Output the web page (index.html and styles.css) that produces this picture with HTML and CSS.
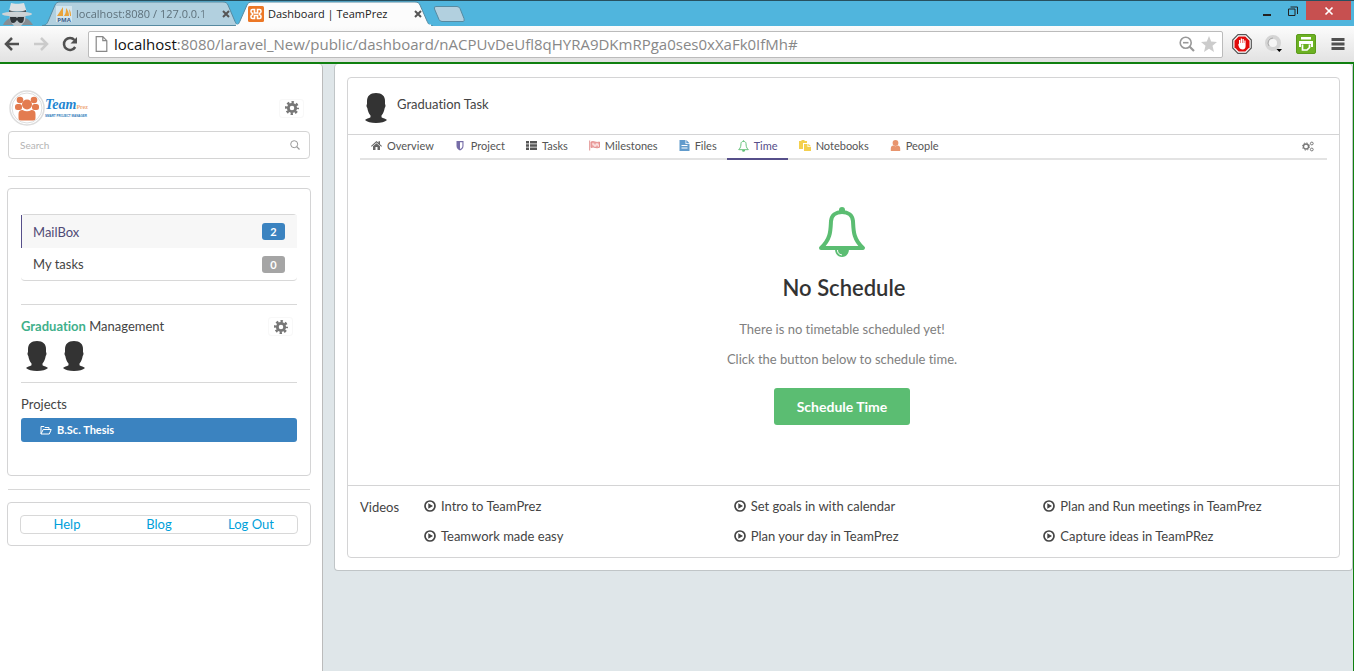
FILE: index.html
```html
<!DOCTYPE html>
<html lang="en">
<head>
<meta charset="utf-8">
<title>Dashboard | TeamPrez</title>
<link rel="stylesheet" href="styles.css">
</head>
<body>
<svg class="defs" aria-hidden="true">
  <symbol id="gear" viewBox="0 0 16 16"><g fill="none" stroke="currentColor"><circle cx="8" cy="8" r="4.200" stroke-width="3.200"/><circle cx="8" cy="8" r="6.600" stroke-width="2.800" stroke-dasharray="2.700 2.484" stroke-dashoffset="1.350"/></g></symbol>
  <symbol id="person" viewBox="0 0 24 30"><path fill="#333" d="M12 0c6 0 9 3 9 8v3c.8 1 .6 3-.3 4-.6 3.500-1.500 5.500-3.200 7.500v1.800c1.500 1 4.500 1.500 5.500 2.700C21 28.800 17 30 12 30S3 28.800 1 27c1-1.200 4-1.700 5.500-2.700v-1.800C4.800 20.500 3.900 18.500 3.300 15c-.9-1-1.100-3-.3-4V8c0-5 3-8 9-8z"/></symbol>
  <symbol id="play" viewBox="0 0 12 12"><circle cx="6" cy="6" r="5" fill="none" stroke="currentColor" stroke-width="1.700"/><path d="M4.300 3.200v5.600L9 6z" fill="currentColor"/></symbol>
  <symbol id="bell" viewBox="0 0 48 50"><g fill="none" stroke="currentColor" stroke-width="4" stroke-linejoin="round"><path d="M3 41C13 32 12.500 23 13 14c.5-6 5-9 11-9s10.500 3 11 9c.5 9 0 18 10 27z"/></g><path d="M21 5V3a3 3 0 0 1 6 0v2zM17 42h14c0 5-3 8-7 8s-7-3-7-8z" fill="currentColor"/><path d="M19.500 43c0 3 1.500 4.500 4.500 5" fill="none" stroke="#fff"/></symbol>
</svg>

<header class="browser">
  <div class="tabstrip">
    <svg class="incognito" viewBox="0 0 34 25"><path d="M3 24c2-4 4-6 7-7h15c4 1 6 4 8 7z" fill="#858d93"/><path d="M9 12h17l-1 8-4 5h-7l-4-5z" fill="#bbc3c8"/><path d="M11 2c3 1 9 1 13 0l2.500 8H9z" fill="#dce1e4"/><path d="M9 9c5 2 12 2 17 0v3H9z" fill="#444c52"/><ellipse cx="17" cy="13" rx="15" ry="2.600" fill="#cdd3d6"/><path d="M10 16h6l1 1 1-1h6c0 4-1 6-3 6s-3-2-4-3c-1 1-2 3-4 3s-3-2-3-6z" fill="#30363a"/></svg>
    <div class="tab tab-back">
      <svg class="tab-shape" viewBox="0 0 199 25" preserveAspectRatio="none"><path d="M0 24.500c4 0 5-2 6-4L13 4c1-2 2-3 5-3h163c3 0 4 1 5 3l7 16.500c1 2 2 4 6 4z" fill="#b2d0df" stroke="#568aa1"/></svg>
      <svg class="fav" viewBox="0 0 16 16"><path fill="#d3e5ee" d="M0 0h16v16H0z"/><path d="M7 1v9H1zM10 2c2 2 3 5 3 8H8c2-3 2-5 2-8zM13 3c2 2 2 5 2 7h-1z" fill="#e9a33b"/><text x="8" y="15.500" font-size="6" font-weight="bold" text-anchor="middle" fill="#385c89">PMA</text></svg>
      <span class="tab-title fade">localhost:8080 / 127.0.0.1</span>
      <button class="close" aria-label="Close tab"><svg viewBox="0 0 8 8"><path d="M1 1l6 6M7 1L1 7"/></svg></button>
    </div>
    <div class="tab tab-front">
      <svg class="tab-shape" viewBox="0 0 199 25" preserveAspectRatio="none"><path d="M0 25c4 0 5-3 6-5L13 4c1-2 2-3 5-3h163c3 0 4 1 5 3l7 16c1 2 2 5 6 5z" fill="#fcfcfc" stroke="#568aa1"/><path d="M2 24.500h195" stroke="#fcfcfc" stroke-width="2"/></svg>
      <svg class="fav" viewBox="0 0 16 16"><rect width="16" height="16" rx="1.500" fill="#ec7725"/><path d="M6.500 7V3.500h-2Q3 3.500 3 5v.5Q3 7 4.500 7.200v1.600Q3 9 3 10.500v.5q0 1.500 1.500 1.500h2V9.500h3v3h2q1.500 0 1.500-1.500v-.5q0-1.500-1.500-1.700V7.200Q13 7 13 5.500V5q0-1.500-1.500-1.500h-2V7z" fill="none" stroke="#fff" stroke-width="1.600"/></svg>
      <span class="tab-title">Dashboard | TeamPrez</span>
      <button class="close" aria-label="Close tab"><svg viewBox="0 0 8 8"><path d="M1 1l6 6M7 1L1 7"/></svg></button>
    </div>
    <button class="newtab" aria-label="New tab"><svg viewBox="0 0 32 16"><path d="M3 .5h21q2 0 3 2l4 10q1 3-1 3H9q-2 0-3-2L1.500 3q-1-2.500 1.500-2.500z" fill="#b2d0df" stroke="#568aa1"/></svg></button>
    <div class="window-buttons">
      <button aria-label="Minimize"><svg viewBox="0 0 10 10"><path d="M1 8h8v2H1z" fill="#222"/></svg></button>
      <button aria-label="Restore"><svg viewBox="0 0 10 10"><path d="M.5 3h6.500v6.500H.500zM2.500 1h7v7" fill="none" stroke="#222"/></svg></button>
      <button class="win-close" aria-label="Close"><svg viewBox="0 0 10 10"><path d="M1.500 1.500l7 7M8.500 1.500l-7 7" stroke="#fff" stroke-width="1.700"/></svg></button>
    </div>
  </div>
  <div class="toolbar">
    <button aria-label="Back"><svg viewBox="0 0 16 16"><path d="M15 8H3M8 2L2 8l6 6" fill="none" stroke="#505050" stroke-width="2.500"/></svg></button>
    <button aria-label="Forward"><svg viewBox="0 0 16 16"><path d="M1 8h12M8 2l6 6-6 6" fill="none" stroke="#cbcbcb" stroke-width="2.500"/></svg></button>
    <button aria-label="Reload"><svg viewBox="0 0 16 16"><path d="M13.200 11A6 6 0 1 1 12.500 4" fill="none" stroke="#505050" stroke-width="2.500"/><path d="M15 1v6.500H8.500z" fill="#505050"/></svg></button>
    <div class="address">
      <svg class="doc" viewBox="0 0 12 16"><path d="M.7.7h6.600l4 4v10.600H.7zM7.300.7v4h4" fill="#fff" stroke="#888" stroke-width="1.200"/></svg>
      <span class="url"><b>localhost</b>:8080/laravel_New/public/dashboard/nACPUvDeUfl8qHYRA9DKmRPga0ses0xXaFk0IfMh#</span>
      <svg class="i16" viewBox="0 0 16 16"><g fill="none" stroke="#999" stroke-width="1.600"><circle cx="6.700" cy="6.700" r="5.500"/><path d="M4 6.700h5.500"/><path d="M10.500 10.500l4.500 4.500" stroke-width="2.200"/></g></svg>
      <svg class="i16" viewBox="0 0 16 16"><path d="M8 0l2.200 5.600 5.800.4-4.500 3.800L13 16l-5-3.300L3 16l1.500-6.200L0 6l5.800-.4z" fill="#ccc"/></svg>
    </div>
    <div class="extensions">
      <button aria-label="Ad blocker"><svg viewBox="0 0 20 20"><path d="M6 .7h8L19.300 6v8L14 19.300H6L.7 14V6z" fill="#fff" stroke="#555" stroke-width="1.200"/><path d="M6.700 2.500h6.600l4.200 4.200v6.600l-4.200 4.200H6.700l-4.200-4.200V6.700z" fill="#e00c0c"/><path d="M6 9.500l1 1V6h1.300v3h.5V4.500H10V9h.5V5h1.300v4h.5V6.500h1.300V12c0 2-1 3.500-3 3.500-3 0-4-3-4.600-6z" fill="#fff"/></svg></button>
      <button aria-label="Status extension"><svg viewBox="0 0 20 20"><circle cx="9" cy="9" r="6" fill="#f5f5f5" stroke="#d4d4d4" stroke-width="4"/><path d="M5 12a5 5 0 0 1 4-8" stroke="#aaa" fill="none"/><path d="M12.500 15h5.500l-2.700 3z" fill="#000"/></svg></button>
      <button aria-label="Print friendly"><svg viewBox="0 0 20 20"><rect x=".5" y=".5" width="19" height="19" rx="1.500" fill="#6cb122" stroke="#5b9b1c"/><path d="M5 3h10v2.500H5zM3 7h14v6h-2v-3H5v3H3z" fill="#fff"/><path d="M6.500 10.500V16h4.500l2.500-2.500v-3" fill="none" stroke="#fff" stroke-width="1.700"/></svg></button>
      <button aria-label="Menu"><svg viewBox="0 0 20 20"><path d="M3.500 5.500h13M3.500 10h13M3.500 14.500h13" stroke="#505050" stroke-width="3"/></svg></button>
    </div>
  </div>
</header>

<div class="page">
  <aside class="sidebar">
    <div class="brand">
      <a href="#" class="logo">
        <svg viewBox="0 0 36 36"><circle cx="18" cy="18" r="17" fill="#fff" stroke="#ddd" stroke-width="1.500"/><circle cx="18" cy="18" r="15" fill="none" stroke="#ddd"/><g fill="#e37c50"><circle cx="11" cy="10" r="3.300"/><circle cx="25" cy="10" r="3.300"/><rect x="6" y="14" width="7" height="6" rx="2.500"/><rect x="23" y="14" width="7" height="6" rx="2.500"/><circle cx="18" cy="14.500" r="5"/><path d="M9.500 24q0-4 4-4 4.500 2.500 9 0 4 0 4 4v4q0 2.500-2.500 2.500H12q-2.500 0-2.500-2.500z"/></g></svg>
        <span class="wordmark"><span class="name">Team<small>Prez</small></span><span class="tag">SMART PROJECT MANAGER</span></span>
      </a>
      <button class="gear" aria-label="Settings"><svg><use href="#gear"/></svg></button>
    </div>
    <label class="search">
      <input type="text" placeholder="Search" aria-label="Search">
      <svg viewBox="0 0 10 10"><circle cx="4.200" cy="4.200" r="3.500" fill="none" stroke="#999"/><path d="M6.700 6.700l2.800 2.800" stroke="#999" stroke-width="1.200"/></svg>
    </label>
    <hr>
    <section class="card side-card">
      <nav class="mail">
        <a href="#" class="on">MailBox<span class="badge blue">2</span></a>
        <a href="#">My tasks<span class="badge">0</span></a>
      </nav>
      <hr>
      <div class="team-head"><h2><strong>Graduation</strong> Management</h2><button class="gear" aria-label="Team settings"><svg><use href="#gear"/></svg></button></div>
      <div class="people"><svg class="avatar"><use href="#person"/></svg><svg class="avatar"><use href="#person"/></svg></div>
      <hr>
      <h2 class="projects">Projects</h2>
      <a href="#" class="project"><svg viewBox="0 0 12 10"><path d="M1 9V1.500h3l1 1h4V4M1 9l2.200-4.500h8L9.300 9z" fill="none" stroke="#fff"/></svg>B.Sc. Thesis</a>
    </section>
    <hr>
    <section class="card foot-card">
      <nav class="foot"><a href="#">Help</a><a href="#">Blog</a><a href="#">Log Out</a></nav>
    </section>
  </aside>

  <main class="main">
    <section class="panel">
      <div class="card work">
        <div class="head"><svg class="avatar"><use href="#person"/></svg><h1>Graduation Task</h1></div>
        <nav class="tabs">
          <a href="#"><svg viewBox="0 0 11 11" fill="#666"><path d="M0 6l5.500-5L7.500 2.800V1.200H9v3L11 6l-.7.700L5.500 2.500.7 6.700z"/><path d="M2 6.300l3.500-3L9 6.300V10H6.500V7h-2v3H2z"/></svg>Overview</a>
          <a href="#"><svg viewBox="0 0 11 11"><path d="M1.500 1h7v5c0 2-1.500 3.500-3.500 4.500C3 9.500 1.500 8 1.500 6z" fill="#766da7"/><path d="M5 2.200h2.400V6c0 1.300-.9 2.300-2.400 3z" fill="#fff"/></svg>Project</a>
          <a href="#"><svg viewBox="0 0 11 11" fill="#555"><path d="M0 1h3v2.500H0zM4 1h7v2.500H4zM0 4.300h3v2.500H0zM4 4.300h7v2.500H4zM0 7.600h3V10H0zM4 7.600h7V10H4z"/></svg>Tasks</a>
          <a href="#"><svg viewBox="0 0 11 11"><path d="M.7.5v10" stroke="#e29291"/><path d="M2 2c3-1.500 5 1.500 8.500 0v5.300C7 9 5 6 2 7.500z" fill="#eeaaa9" stroke="#df8180" stroke-width=".8"/><path d="M3 4h2v2h2V4h2v2h1" stroke="#fff" stroke-width=".8" fill="none"/></svg>Milestones</a>
          <a href="#"><svg viewBox="0 0 11 11"><path d="M.5 0h6v4h4v7H.5zM7.300 0l3.200 3.200H7.300z" fill="#619bcc"/><path d="M2.500 5.500h6M2.500 8h6" stroke="#fff"/></svg>Files</a>
          <a href="#" class="on"><svg class="green"><use href="#bell"/></svg>Time</a>
          <a href="#" class="wide"><svg viewBox="0 0 12 11"><path d="M0 1h2.500V0h3v1H8v2H4v6H0z" fill="#f4d04e"/><path d="M5 4h3.500v3H12v4H5zM9.300 3.700L12 6.300H9.300z" fill="#f4d04e"/></svg>Notebooks</a>
          <a href="#"><svg viewBox="0 0 11 11"><circle cx="5.500" cy="3" r="2.900" fill="#e8956e"/><path d="M.8 11V8.500c0-2 1.200-2.800 2.500-3 1.300 1 3.100 1 4.400 0 1.300.2 2.500 1 2.500 3V11z" fill="#e8956e"/></svg>People</a>
          <button class="cogs" aria-label="Options"><svg viewBox="0 0 12 11" fill="none" stroke="#777"><circle cx="4" cy="5.500" r="2.500" stroke-width="1.300"/><circle cx="4" cy="5.500" r="3.600" stroke-dasharray="1.400 1.427"/><circle cx="9.800" cy="2.500" r="1.400"/><circle cx="9.800" cy="8.500" r="1.400"/></svg></button>
        </nav>
        <div class="empty">
          <svg class="bell"><use href="#bell"/></svg>
          <h2>No Schedule</h2>
          <p>There is no timetable scheduled yet!</p>
          <p>Click the button below to schedule time.</p>
          <button class="primary">Schedule Time</button>
        </div>
        <div class="videos">
          <h3>Videos</h3>
          <div><a href="#"><svg><use href="#play"/></svg>Intro to TeamPrez</a><a href="#"><svg><use href="#play"/></svg>Teamwork made easy</a></div>
          <div><a href="#"><svg><use href="#play"/></svg>Set goals in with calendar</a><a href="#"><svg><use href="#play"/></svg>Plan your day in TeamPrez</a></div>
          <div><a href="#"><svg><use href="#play"/></svg>Plan and Run meetings in TeamPrez</a><a href="#"><svg><use href="#play"/></svg>Capture ideas in TeamPRez</a></div>
        </div>
      </div>
    </section>
  </main>
</div>
</body>
</html>
```
FILE: styles.css
```css
* { box-sizing: border-box; }
body { margin: 0; min-height: 100vh; display: flex; flex-direction: column; font: 13px/18px Lato, sans-serif; font-variant-ligatures: none; color: #444; background: #dfe6e9; }
button { padding: 0; border: 0; background: none; font: inherit; color: inherit; display: flex; align-items: center; justify-content: center; }
a { color: inherit; text-decoration: none; }
h1, h2, h3, p { margin: 0; font: inherit; }
svg { display: block; flex: none; }
hr { margin: 0; border: 0; border-top: 1px solid #d8d8d8; }
.defs { position: absolute; width: 0; height: 0; }

/* Browser frame */
.browser { font-family: "Open Sans", sans-serif; }
.tabstrip { display: flex; height: 26px; background: #50b5dd; border-top: 1px solid #27505f; }
.incognito { width: 34px; height: 25px; }
.tab { position: relative; display: flex; align-items: center; width: 199px; height: 25px; padding: 0 10px 0 14px; margin-left: 8px; font-size: 11px; }
.tab-shape { position: absolute; inset: 0; width: 100%; height: 100%; }
.tab-front { margin-left: -7px; }
.fav, .tab-title, .close { position: relative; }
.fav { width: 16px; height: 16px; font-family: "Open Sans", sans-serif; overflow: visible; }
.tab-title { flex: 1; margin-left: 4px; white-space: nowrap; color: #222; }
.tab-back .tab-title { color: #5e717b; }
.fade { mask-image: linear-gradient(90deg, #000 90%, #0006); }
.close { width: 10px; height: 10px; margin-left: 8px; }
.close svg { width: 8px; height: 8px; stroke: #555; stroke-width: 2; }
.newtab svg { width: 32px; height: 16px; }
.window-buttons { display: flex; margin: 0 3px 0 auto; height: 19px; }
.window-buttons button { width: 26px; }
.window-buttons svg { width: 10px; height: 10px; }
.window-buttons .win-close { width: 45px; background: #c75050; }
.toolbar { display: flex; align-items: center; gap: 13px; height: 36px; padding: 0 6px 0 4px; background: linear-gradient(#fcfcfc, #e2e2e2); }
.toolbar > button svg { width: 16px; height: 16px; }
.address { display: flex; flex: 1; align-items: center; gap: 6px; min-width: 0; height: 27px; margin-left: -3px; padding: 0 5px 0 6px; border: 1px solid #bbb; border-radius: 2px; background: #fff; }
.doc { width: 13px; height: 16px; }
.url { flex: 1; overflow: hidden; white-space: nowrap; font-size: 15px; line-height: 24px; color: #888; }
.url b { font-weight: 400; color: #111; }
.i16 { width: 16px; height: 16px; }
.extensions { display: flex; gap: 12px; margin-left: -4px; }
.extensions svg { width: 20px; height: 20px; }

/* Page shell */
.page { display: flex; flex: 1; border-top: 2px solid #108010; border-right: 1px solid #108010; }
.sidebar { width: 323px; padding: 26px 12px 0 8px; background: #fff; border-right: 1px solid #bbb; border-radius: 0 4px 0 0; }
.main { flex: 1; min-width: 0; padding-left: 11px; }
.panel { padding: 13px 12px 12px; background: #fff; border: 1px solid #c0c5c7; border-top: 0; border-radius: 4px; }
.card { background: #fff; border: 1px solid #d4d4d5; border-radius: 4px; }

/* Sidebar */
.brand { display: flex; justify-content: space-between; align-items: center; padding-right: 6px; }
.logo { display: flex; align-items: center; margin-left: 1px; }
.logo svg { width: 36px; height: 36px; }
.wordmark { display: flex; flex-direction: column; white-space: nowrap; font-family: "Liberation Serif", serif; }
.name { font-size: 14px; line-height: 14px; font-style: italic; font-weight: 700; color: #2384d0; }
.name small { font-size: 6px; font-style: normal; color: #eeaa80; }
.tag { font: 700 3px/4px "Liberation Sans", sans-serif; color: #2d79b9; }
.gear { width: 25px; height: 19px; border: 1px solid #f8f8f8; border-radius: 3px; color: #777; }
.gear svg { width: 14px; height: 14px; }
.search { display: flex; align-items: center; height: 28px; margin: 5px 0 17px; padding: 0 9px 0 11px; border: 1px solid #d4d4d4; border-radius: 4px; }
.search input { flex: 1; min-width: 0; padding: 0; border: 0; outline: 0; font: 10px/14px Lato, sans-serif; }
.search input::placeholder { color: #b4b4b4; }
.search svg { width: 10px; height: 10px; }
.side-card { margin: 11px -1px 13px; padding: 25px 13px 33px; }
.mail { border: solid #d8d8d8; border-width: 1px 0; border-radius: 4px; margin-bottom: 23px; }
.mail a { display: flex; align-items: center; justify-content: space-between; height: 32px; padding: 0 12px; }
.mail .on { height: 33px; border-left: 1px solid #564f8a; background: #f7f7f7; color: #4f4a75; padding-left: 11px; }
.badge { width: 23px; border-radius: 3px; background: #a5a5a5; color: #fff; font-size: 11px; font-weight: 700; line-height: 17px; text-align: center; }
.blue { background: #3b83c0; }
.team-head { display: flex; justify-content: space-between; padding: 12px 4px 0 0; }
.team-head strong { color: #3fb08b; }
.people { display: flex; gap: 13px; padding: 5px 0 11px 4px; }
.avatar { width: 24px; height: 30px; }
.projects { padding: 12px 0 5px; }
.project { display: flex; align-items: center; gap: 5px; height: 24px; padding-left: 19px; border-radius: 3px; background: #3b83c0; color: #fff; font-size: 11px; font-weight: 700; }
.project svg { width: 12px; height: 10px; }
.foot-card { margin: 12px -1px 0; padding: 12px 12px 11px; }
.foot { display: grid; grid-template-columns: repeat(3, 1fr); border: 1px solid #d8d8d8; border-radius: 4px; line-height: 17px; text-align: center; color: #009fda; }

/* Workspace */
.head { display: flex; gap: 9px; height: 57px; padding: 15px 16px 0; border-bottom: 1px solid #d4d4d5; }
.head h1 { padding-top: 2px; }
.tabs { display: flex; margin: 0 12px; height: 25px; border-bottom: 2px solid #e3e3e3; font-size: 11px; }
.tabs a { display: flex; align-items: center; gap: 5px; height: 25px; padding: 0 10px 2px 11px; border-bottom: 2px solid transparent; color: #555; }
.tabs svg { width: 11px; height: 11px; }
.tabs .wide svg { width: 12px; }
.tabs .on { border-color: #564f8a; color: #564f8a; }
.tabs .green { color: #5bbd72; height: 12px; }
.cogs { margin: 0 13px 0 auto; }
.tabs .cogs svg { width: 12px; }
.empty { display: flex; flex-direction: column; align-items: center; padding: 47px 3px 60px 0; color: #808080; }
.bell { width: 48px; height: 50px; color: #5bbd72; }
.empty h2 { margin: 16px 0 17px; padding-left: 4px; font-size: 22px; line-height: 30px; font-weight: 600; color: #333; }
.empty p { margin-bottom: 12px; }
.primary { margin-top: 8px; padding: 0 23px; height: 37px; border-radius: 3px; background: #5bbd72; color: #fff; font-size: 14px; font-weight: 700; }
.videos { display: grid; grid-template-columns: 1fr 5fr 5fr 5fr; border-top: 1px solid #d4d4d5; padding: 11px 0 12px; }
.videos h3 { padding: 1px 0 0 12px; }
.videos div { display: flex; flex-direction: column; gap: 12px; padding-left: 14px; }
.videos a { display: flex; align-items: center; gap: 5px; }
.videos svg { width: 12px; height: 12px; }
```
